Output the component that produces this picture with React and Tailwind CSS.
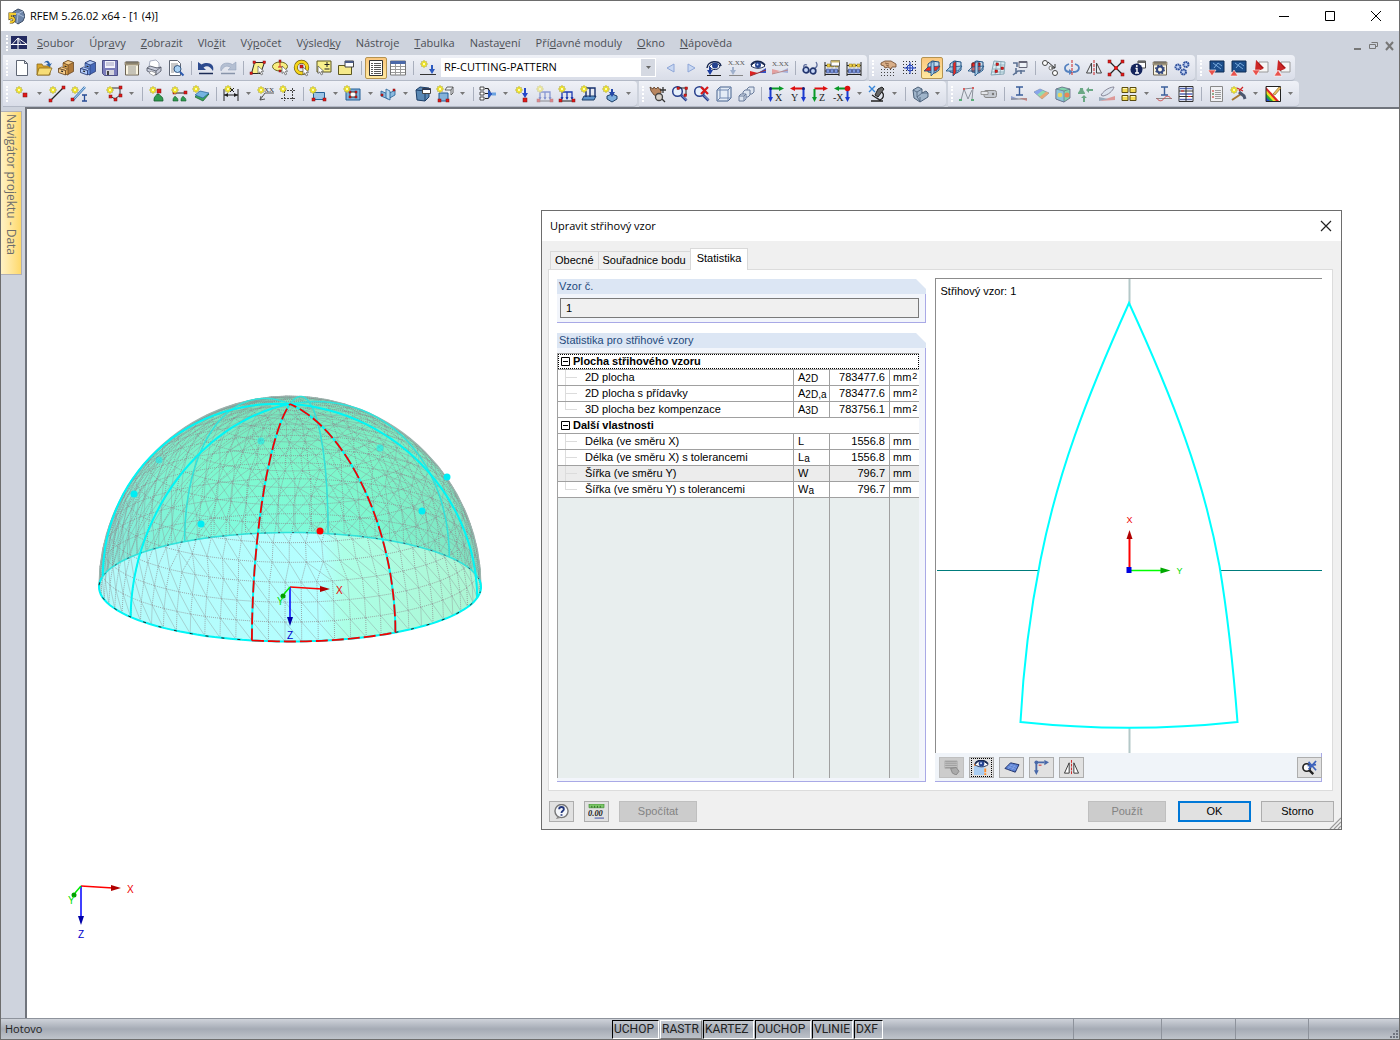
import { useState } from "react";

const Star = ({ x = 0, y = 0 }) => (
  <g transform={`translate(${x} ${y})`}>
    <path d="M4 .5v7M.5 4h7M1.500 1.500l5 5M6.500 1.500l-5 5" stroke="#a8a040" strokeWidth="1.600" />
    <path d="M4 .5v7M.5 4h7M2 2l4 4M6 2L2 6" stroke="#f5ea28" strokeWidth="1.200" />
    <rect x="3" y="3" width="2" height="2" fill="#fffcb0" />
  </g>
);

const Node = ({ x, y, s = 4 }) => (
  <rect x={x} y={y} width={s} height={s} fill="#e01818" stroke="#7c1414" strokeWidth=".5" />
);

const Cursor = ({ x = 8, y = 7 }) => (
  <path
    transform={`translate(${x} ${y})`}
    d="M0 0v7.5l1.8-1.6 1.4 3 1.5-.7-1.4-2.8 2.4-.2z"
    fill="#fff"
    stroke="#555"
    strokeWidth=".7"
  />
);

const Cabinet = ({ light, mid, dark, line }) => (
  <>
    <path d="M5 3l5-2.500 5.500 2v9L9 15V5z" fill={dark} stroke={line} strokeWidth=".7" />
    <path d="M5 3l5-2.500 5.500 2L10 5z" fill={light} stroke={line} strokeWidth=".6" />
    <path d="M5 3l5 2v10l-5-2z" fill={mid} stroke={line} strokeWidth=".6" />
    <path d="M.5 8.500l3-1.500 6 2-2 1.500z" fill={light} stroke={line} strokeWidth=".6" />
    <path d="M.5 8.500l7 2v4.500l-7-2.500z" fill={light} stroke={line} strokeWidth=".8" />
    <path d="M3 11l2 .6M6.500 6l2 .7" stroke="#222" strokeWidth="1.200" />
  </>
);

const Planes = ({ red }) => (
  <>
    <path d="M4 4l4-3 7 1v8l-4 3-7-1z" fill="#c4dcee" stroke="#1d4f80" />
    {red === 3 && <path d="M4 3h8v8H4z" fill="#ee2a20" stroke="#7c1414" />}
    <path d="M0 11l4-4 12-1-4 5z" fill={red === 1 ? "#ee2a20" : "#9cc6e4"} stroke="#1d4f80" strokeWidth=".8" fillOpacity={red === 3 ? 0.4 : 1} />
    <path d="M7 3l3-2v12l-3 3z" fill={red === 2 ? "#ee2a20" : "#a6cbe6"} stroke="#1d4f80" strokeWidth=".8" />
  </>
);

const Lens = () => (
  <>
    <circle cx="5.500" cy="5.500" r="4.800" fill="#e6f0fb" stroke="#263e8c" strokeWidth="1.500" />
    <path d="M9 9l5.500 5.500" stroke="#263e8c" strokeWidth="2.600" />
    <path d="M10 9.500l4.500 4.500" stroke="#9db0e0" />
  </>
);

const Eye = ({ y = 0 }) => (
  <g transform={`translate(0 ${y})`}>
    <path d="M1 6c3-5 10-5 14 0-4 3-10 3-14 0z" fill="#fff" stroke="#16264f" />
    <path d="M1 5c3-5 10-5 14 0" fill="none" stroke="#16264f" strokeWidth="1.500" />
    <circle cx="8" cy="5" r="3" fill="#24428f" />
    <circle cx="7.500" cy="4.500" r="1" fill="#cfe0ff" />
  </g>
);

const AxisView = ({ letter, flip, dot }) => (
  <>
    <g transform={flip ? "translate(16 0) scale(-1 1)" : undefined}>
      <path d="M2.500 2.500H11" stroke={flip ? (dot ? "#0a9a28" : "#d11") : "#0a9a28"} strokeWidth="2" />
      <path d="M11 0l5 2.500L11 5z" fill={flip ? (dot ? "#0a9a28" : "#d11") : "#0a9a28"} />
      <path d="M2.500 3v8" stroke="#1c3bd0" strokeWidth="2" />
      <path d="M0 11l2.500 5L5 11z" fill="#1c3bd0" />
      <circle cx="2.500" cy="2.500" r={dot ? 2.8 : 1.5} fill={dot ? "#d11" : "#14207c"} />
    </g>
    <text x={flip ? (dot ? -1 : 1) : 7} y="15" fontSize="10" fontFamily="Liberation Serif" fill="#222">{letter}</text>
  </>
);

const Beads = () => (
  <>
    <path d="M1 2v14M15 2v14M1 5.500h14M1 11h14M1 14.500h14" stroke="#222" />
    <path d="M3 4h3v3H3zM6.500 4h3v3h-3zM11 4h3v3h-3z" fill="#efd04a" stroke="#8a7012" strokeWidth=".5" />
    <path d="M2.500 9h3v4h-3zM6.500 9h3v4h-3zM10.500 9h3v4h-3z" fill="#7b94dc" stroke="#26397e" strokeWidth=".5" />
  </>
);

const Load = ({ faded }) => (
  <g opacity={faded ? 0.45 : 1}>
    <path d="M3 13V6h10v7M8 6v7" fill="none" stroke="#1c3bb0" strokeWidth="1.300" />
    <path d="M1.500 11L3 14l1.500-3M6.500 11L8 14l1.500-3M11.500 11l1.500 3 1.500-3" fill="#1c3bb0" />
    <path d="M1 15h14" stroke="#222" />
    <Star x={-1} y={-1} />
    <Node x={0} y={13} s={3} />
    <Node x={13} y={13} s={3} />
  </g>
);

const Clipboard = () => (
  <>
    <path d="M1.500 3h13v12h-13z" fill="#fbf6e2" stroke="#6b6252" />
    <path d="M1 2h14v3H1z" fill="#b9ad8e" stroke="#6b6252" strokeWidth=".6" />
    <path d="M3 1v3M5 1v3M7 1v3M9 1v3M11 1v3M13 1v3" stroke="#444" strokeWidth=".8" />
  </>
);

const IBeam = () => <path d="M5 1h7M8.500 1v8M5 9h7" fill="none" stroke="#3b5f9c" strokeWidth="1.400" />;

const icons = {
  file: <path d="M2.500 .5h8l3 3v12h-11zM10.500 .5v3h3" fill="#fff" stroke="#5f6674" />,
  open: (
    <>
      <path d="M1 4h5l1 2h7v9H1z" fill="#d9a62c" stroke="#8a6a1c" strokeWidth=".8" />
      <path d="M3 8h13l-3 7H1z" fill="#f7dd76" stroke="#8a6a1c" strokeWidth=".8" />
      <path d="M8 3c2-3 5-3 6 1l2-1-2.500 4L10 4.500l2-.5c-1-2-2-2-4-1z" fill="#2c63a8" />
    </>
  ),
  cabinet: <Cabinet light="#f4cc8c" mid="#dfa650" dark="#b07a3a" line="#5e3c18" />,
  cabinetBlue: <Cabinet light="#b4ccf8" mid="#7096e0" dark="#4668b8" line="#1c2f68" />,
  save: (
    <>
      <path d="M.5.500h15v15h-13l-2-2z" fill="#7a7cba" stroke="#4c4f86" />
      <path d="M3 1h10v7H3z" fill="#f3f3fb" />
      <path d="M4 3h8M4 5h8" stroke="#a0a0c0" />
      <path d="M4 10h8v5H4z" fill="#d5d5de" />
      <path d="M5 11h2v4H5z" fill="#444" />
    </>
  ),
  clipboard: (
    <>
      <Clipboard />
      <path d="M4 7h8M4 9h8M4 11h8M4 13h8" stroke="#777" strokeWidth=".8" />
    </>
  ),
  print: (
    <>
      <path d="M3 7l1-6 6-1 3 3v5z" fill="#fff" stroke="#8890a8" strokeWidth=".7" />
      <path d="M1 8l3-2 7 2 4-1v4l-5 4-9-4z" fill="#c9cddb" stroke="#4d5260" strokeWidth=".8" />
      <path d="M1 8l9 3 5-4M10 11v4" fill="none" stroke="#4d5260" strokeWidth=".8" />
      <path d="M3 13l2-2 5 2-2 3z" fill="#fff" stroke="#555" strokeWidth=".5" />
    </>
  ),
  preview: (
    <>
      <path d="M1.500 .5h8l3 3v12h-11z" fill="#fff" stroke="#5f6674" />
      <path d="M3 4h7M3 6h7M3 8h4M3 10h3M3 12h3" stroke="#777" strokeWidth=".8" />
      <circle cx="9.500" cy="9" r="3.500" fill="#a9d2f5" stroke="#34557f" />
      <path d="M12 12l3.500 3.500" stroke="#2d5bb0" strokeWidth="2" />
    </>
  ),
  undo: (
    <>
      <path d="M0 2v8h8L5.500 7.500C9 5 12 6 15 11 17 4 10 1 3.500 4.500z" fill="#2c4a8e" />
      <path d="M1 13.500h14" stroke="#1b2b55" strokeWidth="1.500" />
    </>
  ),
  redo: (
    <>
      <path d="M16 2v8H8l2.500-2.500C7 5 4 6 1 11-1 4 6 1 12.500 4.500z" fill="#b4bfd2" stroke="#8f9cb6" strokeWidth=".5" />
      <path d="M1 13.500h14" stroke="#8894aa" strokeWidth="1.500" />
    </>
  ),
  pickPlane: (
    <>
      <path d="M4.500 2.500h10l-4 11h-9z" fill="#f8f08c" stroke="#2a2a20" />
      <Node x={3} y={1} s={2.5} />
      <Node x={13} y={1} s={2.5} />
      <Node x={0} y={12} s={2.5} />
      <Cursor x={8} y={6} />
    </>
  ),
  pickEllipse: (
    <>
      <ellipse cx="8" cy="6.500" rx="7.500" ry="4.500" fill="#f8ee80" stroke="#6b651c" />
      <path d="M8 1v6M6 7h5" stroke="#c22" />
      <Node x={7} y={0} s={2} />
      <Node x={7} y={10} s={2} />
      <Cursor x={10} y={6} />
    </>
  ),
  pickRing: (
    <>
      <circle cx="7.500" cy="7.500" r="5.700" fill="none" stroke="#6b5a10" strokeWidth="4" />
      <circle cx="7.500" cy="7.500" r="5.700" fill="none" stroke="#f6d51a" strokeWidth="2.600" />
      <Node x={6} y={5} s={3} />
      <Cursor x={9} y={7} />
    </>
  ),
  pickAdd: (
    <>
      <path d="M1 1h14v11H1z" fill="#f8f08c" stroke="#5c5720" />
      <path d="M11 2v5M8.500 4.500h5M8.500 9h5" stroke="#222" />
      <Cursor x={2} y={6} />
    </>
  ),
  pickWindow: (
    <>
      <path d="M.5 5.500h13v9H.5z" fill="#f5e98a" stroke="#5c5720" />
      <path d="M7 1h8.500v6H7z" fill="#fff" stroke="#444" />
      <path d="M7 1h8.500v2H7z" fill="#4a5b88" />
    </>
  ),
  list: (
    <>
      <path d="M1.500 .5h13v15h-13z" fill="#fff" stroke="#333" />
      <path d="M6 3.500h7M6 5.500h7M6 7.500h7M6 9.500h7M6 11.500h7M6 13.500h7M3 3.500h2M3 5.500h2M3 7.500h2M3 9.500h2M3 11.500h2M3 13.500h2" stroke="#444" strokeWidth=".9" />
    </>
  ),
  grid: (
    <>
      <path d="M.5 1h15v14H.5z" fill="#fff" stroke="#777" />
      <path d="M.5 1h15v3H.5z" fill="#4a68a8" />
      <path d="M1 6.500h14M1 9.500h14M1 12.500h14M5.500 4v11M10.500 4v11" stroke="#9a9a9a" />
    </>
  ),
  starLoad: (
    <>
      <Star x={0} y={0} />
      <path d="M12 5v5" stroke="#2c5ac0" strokeWidth="2" />
      <path d="M9 9l3 5 3-5z" fill="#2c5ac0" />
      <path d="M0 14.500h16" stroke="#333" />
    </>
  ),
  prev: <path d="M12 4v8L5 8z" fill="#c9d8f2" stroke="#8ea6d8" />,
  next: <path d="M4 4v8l7-4z" fill="#c9d8f2" stroke="#8ea6d8" />,
  eyeLoad: (
    <>
      <path d="M1 8C1 1 14-1 15 6" fill="none" stroke="#16264f" strokeWidth="1.500" />
      <path d="M3 7c2-4 8-5 11-1-1 4-7 5-11 1z" fill="#fff" stroke="#16264f" />
      <circle cx="9" cy="5.500" r="3" fill="#24428f" />
      <path d="M4 7v4" stroke="#1d3fa0" strokeWidth="2" />
      <path d="M1 10l3 5 3-5z" fill="#1d3fa0" />
      <path d="M1 15.500h14" stroke="#222" />
    </>
  ),
  valLoad: (
    <>
      <text x="0" y="5" fontSize="7" fontFamily="Liberation Serif" fill="#555">X.XX</text>
      <path d="M5 7v4" stroke="#9fb0cc" strokeWidth="2" />
      <path d="M2 10l3 5 3-5z" fill="#9fb0cc" />
      <path d="M1 15.500h14" stroke="#888" />
    </>
  ),
  eyeResult: (
    <>
      <path d="M0 16v-5l8 2z" fill="#d22" />
      <path d="M16 8v5l-8 0z" fill="#3454c8" />
      <path d="M0 16l16-6" stroke="#933" />
      <Eye />
    </>
  ),
  valResult: (
    <>
      <text x="0" y="6" fontSize="7" fontFamily="Liberation Serif" fill="#555">X.XX</text>
      <path d="M0 14v-5l8 2z" fill="#e4a0a0" />
      <path d="M16 8v5l-8-1z" fill="#a3b0dc" />
      <path d="M0 14l16-4" stroke="#b88" />
    </>
  ),
  glasses: (
    <>
      <circle cx="4" cy="10" r="2.800" fill="#c6d6f6" stroke="#22356e" strokeWidth="1.700" />
      <circle cx="11" cy="11" r="2.800" fill="#c6d6f6" stroke="#22356e" strokeWidth="1.700" />
      <path d="M2 8c-1-3 1-4 3-3M13 8c2-1 3-3 1-6" fill="none" stroke="#5c6c9c" strokeWidth="1.300" />
    </>
  ),
  abacusWin: (
    <>
      <Beads />
      <path d="M7 .5h8.500V6H7z" fill="#fff" stroke="#444" strokeWidth=".8" />
      <path d="M7 .5h8.500v2H7z" fill="#c8b468" />
    </>
  ),
  abacus: <Beads />,
  handGrid: (
    <>
      <path d="M1 9.500h15M1 12.500h15M1 15.500h15" stroke="#444" strokeDasharray="1 2" />
      <path d="M1 3l4-2 6 0 5 3v3l-4 0-1 2-3-2-3 1-1-2-3-1z" fill="#d8ae88" stroke="#6b452a" strokeWidth=".8" />
      <path d="M5 3l4 1M6 5l3 1" stroke="#6b452a" strokeWidth=".7" />
    </>
  ),
  snapGrid: (
    <>
      <path d="M1 1.500h15M1 4.500h15M1 7.500h15M1 10.500h15M1 13.500h15" stroke="#333" strokeDasharray="1 2" />
      <circle cx="8" cy="8" r="3" fill="#dce7fb" stroke="#1b3ab8" />
      <path d="M8 2v12M2 8h12" stroke="#1b3ab8" />
    </>
  ),
  planeXY: <Planes red={1} />,
  planeYZ: <Planes red={2} />,
  planeXZ: <Planes red={3} />,
  gridRed: (
    <>
      <path d="M4 1l11 1-1 12-13 1z" fill="#d8ecf3" stroke="#86a6b4" />
      <path d="M4 5h11M3 9h11M2 12h12M7 1L5 15M11 1l-1 14" stroke="#86a6b4" strokeWidth=".8" />
      <Node x={6} y={3} s={2.5} />
      <Node x={11} y={7} s={2.5} />
      <Node x={5} y={10} s={2.5} />
    </>
  ),
  plug: (
    <>
      <path d="M7 1.500h8v6H7z" fill="#eef2f8" stroke="#667" />
      <path d="M7 1.500h8v1.500H7z" fill="#667" />
      <path d="M1 3h4v4M1 15l5-4h7M4 8v6M9 10v4" fill="none" stroke="#5c7294" strokeWidth="1.600" />
    </>
  ),
  moveCopy: (
    <>
      <circle cx="3" cy="3" r="2.500" fill="#fff" stroke="#444" />
      <circle cx="13" cy="13" r="2.500" fill="#fff" stroke="#444" />
      <circle cx="9" cy="8" r="2" fill="#fff" stroke="#777" />
      <path d="M6 2l7 6M13 4v4H9" fill="none" stroke="#333" />
    </>
  ),
  rotate: (
    <>
      <path d="M5 4C-1 6 0 12 6 12M11 4c6 2 5 8-2 8" fill="none" stroke="#5582c0" strokeWidth="1.800" />
      <path d="M5 9l4 3-4 3z" fill="#5582c0" />
      <path d="M8 0v16" stroke="#c22" strokeDasharray="3 1" />
    </>
  ),
  mirror: (
    <>
      <path d="M5.500 3v10H.5zM10.500 3v10h5z" fill="#e8ecf2" stroke="#444" />
      <path d="M8 0v16" stroke="#c22" strokeDasharray="3 1" />
    </>
  ),
  cross: (
    <>
      <path d="M1 1l14 14M15 1L1 15" stroke="#222" strokeWidth="1.200" />
      <Node x={0} y={0} s={3} />
      <Node x={13} y={0} s={3} />
      <Node x={0} y={13} s={3} />
      <Node x={13} y={13} s={3} />
      <circle cx="8" cy="8" r="2" fill="#e01818" />
    </>
  ),
  info: (
    <>
      <path d="M8 1h7.500v7H8z" fill="#fff" stroke="#444" />
      <path d="M8 1h7.500v2H8z" fill="#666" />
      <circle cx="6.500" cy="9.500" r="6" fill="#14245c" />
      <path d="M5.500 8.500h1.500V13M5 13h4" fill="none" stroke="#fff" strokeWidth="1.400" />
      <circle cx="6.800" cy="6" r="1" fill="#fff" />
    </>
  ),
  clipGear: (
    <>
      <Clipboard />
      <circle cx="8" cy="9.500" r="3" fill="none" stroke="#33477e" strokeWidth="2" />
      <circle cx="8" cy="9.500" r="4.300" fill="none" stroke="#33477e" strokeWidth="1.400" strokeDasharray="1.700 1.700" />
    </>
  ),
  gears: (
    <>
      <circle cx="4" cy="7" r="2.500" fill="#c4d4f4" stroke="#2d4f9c" strokeWidth="2" strokeDasharray="1.700 .5" />
      <circle cx="12" cy="4.500" r="2.500" fill="#c4d4f4" stroke="#2d4f9c" strokeWidth="2" strokeDasharray="1.700 .5" />
      <circle cx="9.500" cy="12" r="2.500" fill="#c4d4f4" stroke="#2d4f9c" strokeWidth="2" strokeDasharray="1.700 .5" />
    </>
  ),
  screenDown: (
    <>
      <path d="M2 1h14v11H2z" fill="#1c4e8c" stroke="#0e2c54" />
      <path d="M5 3l8 6M6 8l4-5 4 3" fill="none" stroke="#8fc2f0" strokeWidth=".8" />
      <path d="M0 10h8l-4 6z" fill="#e8524c" stroke="#fff" strokeWidth=".6" />
    </>
  ),
  screenUp: (
    <>
      <path d="M2 1h14v11H2z" fill="#1c4e8c" stroke="#0e2c54" />
      <path d="M5 3l8 6M6 8l4-5 4 3" fill="none" stroke="#8fc2f0" strokeWidth=".8" />
      <path d="M0 16h8l-4-6z" fill="#e8524c" stroke="#fff" strokeWidth=".6" />
    </>
  ),
  wedgeDown: (
    <>
      <path d="M7 2h9v10H7z" fill="#f6f6f6" stroke="#999" />
      <path d="M4 0l8 8-6 3z" fill="#a81010" />
      <path d="M4 0L3 11l8-2-3-3z" fill="#cc2626" />
      <path d="M0 10h8l-4 6z" fill="#e8524c" stroke="#fff" strokeWidth=".6" />
    </>
  ),
  wedgeUp: (
    <>
      <path d="M7 2h9v10H7z" fill="#f6f6f6" stroke="#999" />
      <path d="M4 0l8 8-6 3z" fill="#a81010" />
      <path d="M4 0L3 11l8-2-3-3z" fill="#cc2626" />
      <path d="M0 16h8l-4-6z" fill="#e8524c" stroke="#fff" strokeWidth=".6" />
    </>
  ),
  addNode: (
    <>
      <Star x={1} y={0} />
      <Node x={9} y={7} />
    </>
  ),
  addLine: (
    <>
      <path d="M2 14L14 2" stroke="#222" strokeWidth="1.200" />
      <Node x={13} y={0} s={3} />
      <Node x={0} y={13} s={3} />
      <Star x={0} y={0} />
    </>
  ),
  addMember: (
    <>
      <path d="M2 14L14 1" stroke="#3b78b8" strokeWidth="2.500" />
      <path d="M2 14L14 1" stroke="#bcdcf4" />
      <Star />
      <Node x={0} y={12} s={3} />
      <path d="M11 9h5M13.500 9v6M11 15h5" stroke="#264a94" strokeWidth="1.300" />
    </>
  ),
  addPoly: (
    <>
      <path d="M6 2h8v7l-5 4-5-3" fill="none" stroke="#333" />
      <Star />
      <Node x={13} y={0} s={3} />
      <Node x={13} y={8} s={3} />
      <Node x={3} y={9} s={3} />
      <Node x={8} y={12} s={3} />
    </>
  ),
  addSupport: (
    <>
      <path d="M5 15c0-6 2-4 3-7h2c1 3 4 1 4 7z" fill="#2f9c50" stroke="#145c2a" strokeWidth=".8" />
      <Node x={8} y={3} />
      <Star />
    </>
  ),
  addLineSupport: (
    <>
      <path d="M2 7h13" stroke="#222" />
      <Node x={13} y={5} s={3} />
      <Node x={2} y={5} s={3} />
      <path d="M2 15c0-4 1-3 2-5 1 2 3 1 3 5zM10 15c0-4 1-3 2-5 1 2 3 1 3 5z" fill="#2f9c50" stroke="#145c2a" strokeWidth=".6" />
      <Star />
    </>
  ),
  addSurfSupport: (
    <>
      <path d="M2 11l5-5 9 2-6 7z" fill="#3ca45c" stroke="#145c2a" strokeWidth=".7" />
      <path d="M2 9l5-4 9 2-6 5z" fill="#75b4e0" stroke="#225f96" strokeWidth=".7" />
      <Star x={-1} y={-1} />
    </>
  ),
  dimension: (
    <>
      <path d="M1 3v12M15 3v12M1 9h14" stroke="#222" />
      <path d="M1 9l4-2v4zM15 9l-4-2v4z" fill="#222" />
      <Star x={1} y={-1} />
      <path d="M7 2l4 4M11 2L7 6" stroke="#222" />
    </>
  ),
  comment: (
    <>
      <path d="M2 14l5-7h9M2 14l1-4M2 14l5-1" fill="none" stroke="#555" />
      <Star x={-1} />
      <text x="6" y="6" fontSize="7" fontFamily="Liberation Serif" fill="#333">XX</text>
    </>
  ),
  guides: (
    <>
      <path d="M4.500 2v13M12.500 2v13M1 4.500h15M1 12.500h15" stroke="#444" strokeDasharray="2 1" />
      <Star x={-1} y={-1} />
    </>
  ),
  addSurface: (
    <>
      <path d="M3.500 6.500h11v7h-11z" fill="#9cc4e6" stroke="#225f96" />
      <Star x={-1} />
      <Node x={2} y={12} s={3} />
      <Node x={13} y={12} s={3} />
    </>
  ),
  addOpening: (
    <>
      <path d="M1 3h14v11H1z" fill="#82b2dc" stroke="#225f96" />
      <path d="M5 6h6v5H5z" fill="#fff" stroke="#333" />
      <Node x={4} y={5} s={2} />
      <Node x={10} y={5} s={2} />
      <Node x={4} y={10} s={2} />
      <Node x={10} y={10} s={2} />
      <Star x={-2} y={-1} />
    </>
  ),
  intersect: (
    <>
      <path d="M1 5l7 3v5l-7-3zM8 8l7-4v5l-7 4z" fill="#8ab9de" stroke="#225f96" strokeWidth=".8" />
      <path d="M6 3l4 2v9l-4-2z" fill="#b8d7ee" stroke="#225f96" strokeWidth=".8" />
      <Node x={1} y={8} s={2} />
      <Node x={13} y={3} s={2} />
    </>
  ),
  solidWin: (
    <>
      <path d="M1 4l4-3 9 1v9l-4 4-8-1z" fill="#5a88b4" stroke="#1d3f68" />
      <path d="M1 4l9 1v10" fill="none" stroke="#1d3f68" />
      <path d="M7.500 2.500h8v5h-8z" fill="#fff" stroke="#444" />
      <path d="M7.500 2.500h8V4h-8z" fill="#26365c" />
    </>
  ),
  addSolid: (
    <>
      <path d="M8 4l2-3h6v6l-2 2M8 4h6v5M14 4l2-3" fill="#eef2f8" stroke="#555" strokeWidth=".9" />
      <path d="M2 7h9v8H2z" fill="#84b2da" stroke="#225f96" />
      <Star x={-1} y={-1} />
      <Node x={1} y={13} s={3} />
      <Node x={9} y={13} s={3} />
    </>
  ),
  combos: (
    <>
      <path d="M5 2.500h3L10 6M5 12.500h3L10 10M5 7.500h5" fill="none" stroke="#222" strokeWidth="1.200" />
      <path d="M0 1h4v3H0zM0 6h4v3H0zM0 11h4v3H0z" fill="#fff" stroke="#222" strokeWidth=".8" />
      <path d="M8 4l5 4-5 4z" fill="#2c5ac0" />
      <path d="M12 6.500h4v3h-4z" fill="#6ba2e0" />
    </>
  ),
  nodeLoad: (
    <>
      <path d="M10 2v7" stroke="#2448c8" strokeWidth="2" />
      <path d="M7 7l3 5 3-5z" fill="#2448c8" />
      <Star />
      <Node x={8} y={12} />
    </>
  ),
  lineLoadOff: <Load faded />,
  lineLoad: <Load />,
  surfLoad: (
    <>
      <path d="M1 14l2-4h12l-2 4z" fill="#5e94cc" stroke="#1d3f68" />
      <path d="M4 2h10v9M9 2v9M5 5v6" fill="none" stroke="#16306e" strokeWidth="1.400" />
      <Star x={-1} y={-1} />
    </>
  ),
  solidLoad: (
    <>
      <path d="M4 10l5-2 5 2v3l-5 3-5-3z" fill="#7eaedc" stroke="#1d3f68" />
      <path d="M9 3v4" stroke="#2448a8" strokeWidth="2" />
      <path d="M6 6h6l-3 5z" fill="#2448a8" />
      <Star x={-1} y={-1} />
    </>
  ),
  pan: (
    <>
      <path d="M0 1l3 2 1-2 2 2 2-2 1 2 2 0v4l-3 3-4-1-3-4z" fill="#b98660" stroke="#5a3a22" strokeWidth=".8" />
      <circle cx="9" cy="11" r="3.500" fill="#d8d0c8" stroke="#444" strokeWidth="1.300" />
      <path d="M12 13l3 3M13 1v6M10 4h6" stroke="#333" strokeWidth="1.300" />
    </>
  ),
  zoomWin: (
    <>
      <Lens />
      <path d="M6 2h8v7" fill="none" stroke="#222" />
      <Node x={5} y={1} s={2.5} />
      <Node x={13} y={1} s={2.5} />
      <Node x={12} y={8} s={2.5} />
    </>
  ),
  zoomOff: (
    <>
      <Lens />
      <path d="M7 1l7 7M14 1L7 8" stroke="#d81818" strokeWidth="2.200" />
    </>
  ),
  cube: (
    <>
      <path d="M1 4l3-3h11v11l-3 3H1z" fill="#e4ecf6" stroke="#45618c" />
      <path d="M1 4h11v11M12 4l3-3M4 1v11h11M4 12l-3 3" fill="none" stroke="#7088b0" />
    </>
  ),
  cubes: (
    <>
      <path d="M9 3l2-2h5v5l-2 2H9z" fill="#dde5f0" stroke="#6a7c9c" />
      <path d="M5 6l2-2h5v5l-2 2H5z" fill="#dde5f0" stroke="#6a7c9c" />
      <path d="M1 10l2-2h5v5l-2 2H1zM1 10h5v5M6 10l2-2" fill="#dde5f0" stroke="#6a7c9c" />
    </>
  ),
  viewX: <AxisView letter="X" />,
  viewY: <AxisView letter="Y" flip />,
  viewZ: (
    <>
      <path d="M2.500 2.500H11" stroke="#d11" strokeWidth="2" />
      <path d="M11 0l5 2.500L11 5z" fill="#d11" />
      <path d="M2.500 3v8" stroke="#0a9a28" strokeWidth="2" />
      <path d="M0 11l2.500 5L5 11z" fill="#0a9a28" />
      <text x="7" y="15" fontSize="10" fontFamily="Liberation Serif" fill="#222">Z</text>
    </>
  ),
  viewNegX: <AxisView letter="-X" flip dot />,
  scope: (
    <>
      <path d="M9 3l4-2 2 2-6 8-3-2z" fill="#666" stroke="#222" />
      <path d="M3 9l6 4M2 15h12M8 12l4 3M13 6c3 3 1 7-2 8" fill="none" stroke="#222" strokeWidth="1.300" />
      <path d="M0 0l6 6M6 0L0 6" stroke="#3a86d8" strokeWidth="1.400" />
    </>
  ),
  block: (
    <>
      <path d="M1 4l5-3 4 2v4l4-2 2 2v4l-8 5-6-4z" fill="#9fb4ca" stroke="#4b6078" />
      <path d="M1 4l4 2v5l3 4M5 6l5-3M5 11l5-4 6 0M8 11v5" fill="none" stroke="#4b6078" strokeWidth=".8" />
    </>
  ),
  arch: (
    <>
      <path d="M2 14L5 3M5 3l9-1M14 2l-1 12M5 3l4 10M9 13l4-9" fill="none" stroke="#8c929c" />
      <path d="M0 13h3v2H0zM12 13h3v2h-3z" fill="#5cae7a" />
      <path d="M4 2h2v2H4zM13 1h2v2h-2z" fill="#d46060" />
    </>
  ),
  roller: (
    <>
      <rect x="3" y="4.500" width="12.500" height="7" rx="2" fill="#c5c9d0" stroke="#888" />
      <path d="M0 5.500h7v3H0z" fill="#e4e6ea" stroke="#888" strokeWidth=".8" />
      <circle cx="12" cy="8" r="1.200" fill="#777" />
    </>
  ),
  beamForce: (
    <>
      <IBeam />
      <path d="M0 10v4l8-1z" fill="#8fa0d0" />
      <path d="M16 15v-3l-8 0z" fill="#d88" />
      <path d="M0 13h16" stroke="#888" />
    </>
  ),
  surfRes: (
    <>
      <path d="M1 6l6-3 9 4-7 6z" fill="#90dcb0" stroke="#668" strokeWidth=".5" />
      <path d="M1 6l6-3 3 1.300-6 4.400z" fill="#88a4ec" />
      <path d="M13 5.700l3 1.300-7 6-2.500-2z" fill="#e8a878" />
    </>
  ),
  solidRes: (
    <>
      <path d="M1 3l6-2 8 2v9l-6 4-8-3z" fill="#82d4ac" stroke="#557" strokeWidth=".7" />
      <path d="M1 3l8 2v11l-8-3zM9 5l6-2" fill="#8fc4d8" stroke="#557" strokeWidth=".5" />
      <circle cx="12" cy="9" r="2.500" fill="#e88858" />
      <circle cx="5" cy="9" r="2.300" fill="#e8d860" />
    </>
  ),
  reaction: (
    <>
      <path d="M1 8c0-3 2-2 2-6h3c0 4 2 3 2 6z" fill="#6aa884" />
      <path d="M7 16v-5M16 4h-5" stroke="#6aa884" strokeWidth="2" />
      <path d="M4 12l3-3 3 3zM12 1L9 4l3 3z" fill="#6aa884" />
    </>
  ),
  blade: (
    <>
      <path d="M2 9c4-6 10-8 13-8-1 4-6 8-11 9z" fill="#dbe3ee" stroke="#889" />
      <path d="M0 15l16-5v4z" fill="#d99" />
      <path d="M0 11l9 2-9 2z" fill="#9ab" />
    </>
  ),
  tiles: (
    <>
      <path d="M1 1.500h6v5H1zM9 1.500h6v5H9zM1 9.500h6v5H1zM9 9.500h6v5H9z" fill="#f4dc54" stroke="#5a4c10" />
      <path d="M2 2.500h4M10 2.500h4M2 10.500h4M10 10.500h4" stroke="#fdf6b8" />
    </>
  ),
  beamWave: (
    <>
      <IBeam />
      <path d="M0 12.500h16" stroke="#888" />
      <path d="M1 12.500c2 3 5 3 7 0s5-3 7 0" fill="none" stroke="#d04848" />
    </>
  ),
  tablePair: (
    <>
      <path d="M1 .5h14v15H1z" fill="#fff" stroke="#333" />
      <path d="M1.500 2.500h13M1.500 8h13M1.500 13.500h13" stroke="#5468b8" strokeWidth="1.600" />
      <path d="M1 5h14M1 10.500h14M8 .5v15" stroke="#333" />
      <path d="M3 5h3M10 10.500h3" stroke="#d22" />
    </>
  ),
  report: (
    <>
      <path d="M2.500 .5h12v15h-12z" fill="#f0f1f4" stroke="#888" />
      <path d="M7 4.500h6M7 6.500h6M7 8.500h6M7 10.500h6M7 12.500h6" stroke="#888" strokeWidth=".8" />
      <path d="M4 4h2v2H4zM4 10h2v2H4z" fill="#d88" />
      <path d="M4 7h2v2H4z" fill="#8a8" />
    </>
  ),
  hammer: (
    <>
      <path d="M2 14l9-6" stroke="#a87830" strokeWidth="2" />
      <path d="M9 6l5 4 1 3" fill="none" stroke="#4c5870" strokeWidth="3" />
      <path d="M7 2l6 3M13 1L9 5" stroke="#c22" strokeWidth="1.200" />
      <Star />
    </>
  ),
  palette: (
    <>
      <path d="M1 1h14v14H1z" fill="#fff" />
      <path d="M1 1l13 14H1z" fill="#e02828" />
      <path d="M1 4l10 11H1z" fill="#f0e020" />
      <path d="M1 7.500L8 15H1z" fill="#28a83c" />
      <path d="M1 11l4 4H1z" fill="#2448c8" />
      <path d="M1 .5h14.500v15H1z" fill="none" stroke="#222" />
      <path d="M8 8l6-7 2 1-6 7z" fill="#eec060" stroke="#7a5a1c" strokeWidth=".6" />
    </>
  ),
};

const row1 = [
  [
    "file", "open", "cabinet", "cabinetBlue", "save", "clipboard", "print", "preview", "|",
    "undo", "redo", "|", "pickPlane", "pickEllipse", "pickRing", "pickAdd", "pickWindow", "|",
    "*list", "grid", "|", "starLoad", "combo", "prev", "next", "eyeLoad", "valLoad", "eyeResult",
    "valResult", "|", "glasses", "abacusWin", "abacus",
  ],
  [
    "handGrid", "snapGrid", "*planeXY", "planeYZ", "planeXZ", "gridRed", "plug", "|",
    "moveCopy", "rotate", "mirror", "cross", "info", "clipGear", "gears",
  ],
  ["screenDown", "screenUp", "wedgeDown", "wedgeUp"],
];

const row2 = [
  [
    "addNode", "v", "addLine", "addMember", "v", "addPoly", "v", "|",
    "addSupport", "addLineSupport", "addSurfSupport", "|", "dimension", "v", "comment", "guides", "|",
    "addSurface", "v", "addOpening", "v", "intersect", "v", "solidWin", "addSolid", "v", "|",
    "combos", "v", "nodeLoad", "lineLoadOff", "lineLoad", "surfLoad", "solidLoad", "v",
  ],
  [
    "pan", "zoomWin", "zoomOff", "cube", "cubes", "|", "viewX", "viewY", "viewZ", "viewNegX", "v",
    "scope", "v", "|", "block", "v",
  ],
  [
    "arch", "roller", "|", "beamForce", "surfRes", "solidRes", "reaction", "blade", "tiles", "v",
    "beamWave", "tablePair", "|", "report", "hammer", "v", "palette", "v",
  ],
];

const menu = [
  ["", "S", "oubor"],
  ["Úpr", "a", "vy"],
  ["", "Z", "obrazit"],
  ["Vlo", "ž", "it"],
  ["Vý", "p", "očet"],
  ["Výsled", "k", "y"],
  ["Nástro", "j", "e"],
  ["", "T", "abulka"],
  ["Nasta", "v", "ení"],
  ["Pří", "d", "avné moduly"],
  ["", "O", "kno"],
  ["", "N", "ápověda"],
];

function Grip() {
  return (
    <span className="w-2 shrink-0 flex justify-center">
      <span className="w-0 h-4 border-l-2 border-dotted border-white" />
    </span>
  );
}

function Tool({ name }) {
  if (name === "|")
    return (
      <span className="w-2 shrink-0 flex justify-center">
        <span className="w-px h-3.5 bg-[#a9afbd]" />
      </span>
    );
  if (name === "v")
    return (
      <button type="button" aria-label="Více" className="w-[13px] shrink-0 flex justify-center">
        <svg width="5" height="3" viewBox="0 0 5 3"><path d="M0 0h5L2.500 3z" fill="#777" /></svg>
      </button>
    );
  if (name === "combo")
    return (
      <span className="w-[220px] shrink-0 px-0.5">
        <span className="relative flex w-[215px] h-[19px] bg-white">
          <select
            aria-label="Zatěžovací stav"
            className="w-full h-full appearance-none bg-transparent pl-[3px] text-[11px] text-black outline-none"
          >
            <option>RF-CUTTING-PATTERN</option>
          </select>
          <span className="absolute right-px top-px w-3.5 h-[17px] bg-[#d5d9e2] flex items-center justify-center pointer-events-none">
            <svg width="5" height="3" viewBox="0 0 5 3"><path d="M0 0h5L2.500 3z" fill="#666" /></svg>
          </span>
        </span>
      </span>
    );
  const active = name.startsWith("*");
  const key = active ? name.slice(1) : name;
  return (
    <button
      type="button"
      aria-label={key}
      className={
        active
          ? "w-[22px] h-[22px] shrink-0 flex items-center justify-center rounded-xs border border-[#b59350] bg-gradient-to-b from-[#fbc77c] to-[#ffe9a0]"
          : "w-[22px] h-[22px] shrink-0 flex items-center justify-center"
      }
    >
      <svg width="16" height="16" viewBox="0 0 16 16" fill="none" className="overflow-visible">
        {icons[key]}
      </svg>
    </button>
  );
}

function ToolRow({ groups }) {
  return (
    <div className="flex gap-0.5 pl-0.5">
      {groups.map((items, i) => (
        <div
          key={i}
          className="flex items-center h-[26px] pr-0.5 rounded-r-sm border-b border-[#b3b9c6] bg-gradient-to-b from-[#eff1f7] to-[#d9dde8]"
        >
          <Grip />
          {items.map((name, j) => (
            <Tool key={j} name={name} />
          ))}
        </div>
      ))}
    </div>
  );
}

const CX = 290;
const CY = 587;
const R = 191;
const deg = Math.PI / 180;

// orthographic view of the hemisphere, theta around the axis, phi above the rim
const project = (theta, phi) => [
  CX + R * Math.cos(phi) * Math.sin(theta),
  CY + 54.5 * Math.cos(phi) * Math.cos(theta) - 183 * Math.sin(phi),
];

const toPath = (points) =>
  points.map(([x, y], i) => `${i ? "L" : "M"}${x.toFixed(1)} ${y.toFixed(1)}`).join("");

const meridian = (angle) =>
  toPath(Array.from({ length: 31 }, (_, i) => project(angle * deg, i * 3 * deg)));

const rim = (from, to) =>
  toPath(Array.from({ length: 31 }, (_, i) => project((from + ((to - from) * i) / 30) * deg, 0)));

function buildMesh() {
  const rings = 15;
  const lines = [];
  const diagonals = [];
  for (let s = 0; s < 8; s++) {
    const start = -11.5 + s * 45;
    const ring = [];
    for (let j = 0; j < rings; j++) {
      const phi = (j * 90 * deg) / rings;
      const n = Math.max(2, Math.round(9 * Math.cos(phi)));
      ring.push(
        Array.from({ length: n + 1 }, (_, i) => project((start + (45 * i) / n) * deg, phi))
      );
    }
    for (let j = 0; j < rings; j++) {
      lines.push(toPath(ring[j]));
      if (j === rings - 1) break;
      const n = ring[j].length - 1;
      const m = ring[j + 1].length - 1;
      for (let i = 0; i <= n; i++) {
        const k = Math.round((i * m) / n);
        lines.push(toPath([ring[j][i], ring[j + 1][k]]));
        if (i > 0 && k > 0) diagonals.push(toPath([ring[j][i], ring[j + 1][k - 1]]));
      }
    }
  }
  return [lines.join(""), diagonals.join("")];
}

const [meshLines, meshDiagonals] = buildMesh();

const dots = [
  [134, 494, 1], [201, 524, 1], [422, 511, 1], [447, 477, 1],
  [261, 441, 0.5], [159, 460, 0.5], [380, 448, 0.5],
];

function Axes({ x, y }) {
  return (
    <g transform={`translate(${x} ${y})`} fontFamily="Liberation Sans" fontSize="10">
      <path d="M0 0l32 2" stroke="#f00" strokeWidth="1.500" />
      <path d="M30 -1l10 3-10 3z" fill="#b00000" />
      <path d="M0 0v31" stroke="#00f" strokeWidth="1.500" />
      <path d="M-3 30h6l-3 9z" fill="#0000a8" />
      <path d="M0 0l-6 7" stroke="#0e0" strokeWidth="1.500" />
      <circle cx="-7" cy="9" r="2.500" fill="#00a000" />
      <text x="46" y="7" fill="#e00">X</text>
      <text x="-13" y="18" fill="#0d0">Y</text>
      <text x="-3" y="52" fill="#00c">Z</text>
    </g>
  );
}

function Dome() {
  return (
    <svg className="absolute inset-0 w-full h-full" fill="none" aria-label="Model">
      <defs>
        <linearGradient id="upper" x1="0" y1="0" x2="0" y2="1">
          <stop offset="0" stopColor="#78dcb6" />
          <stop offset=".35" stopColor="#7cf8cc" />
          <stop offset="1" stopColor="#86ffee" />
        </linearGradient>
        <linearGradient id="side" x1="99" x2="481" y1="0" y2="0" gradientUnits="userSpaceOnUse">
          <stop offset="0" stopColor="#88dcd4" stopOpacity=".7" />
          <stop offset=".4" stopColor="#7cf8cc" stopOpacity="0" />
          <stop offset=".7" stopColor="#7cf2c4" stopOpacity=".5" />
          <stop offset="1" stopColor="#80dab8" stopOpacity=".9" />
        </linearGradient>
        <linearGradient id="lower" x1="99" x2="481" y1="0" y2="0" gradientUnits="userSpaceOnUse">
          <stop offset="0" stopColor="#b4fafa" />
          <stop offset=".58" stopColor="#b4ffff" />
          <stop offset=".64" stopColor="#acffe6" />
          <stop offset="1" stopColor="#acf5d2" />
        </linearGradient>
      </defs>
      <g transform="translate(-27 -109)">
        <path d="M99 587a191 191 0 0 1 382 0z" fill="url(#upper)" />
        <path d="M99 587a191 191 0 0 1 382 0z" fill="url(#side)" />
        <ellipse cx={CX} cy={CY} rx={R} ry="54.500" fill="url(#lower)" />
        <path d={meshLines} stroke="#8c8488" strokeWidth=".7" strokeDasharray="1 1" />
        <path d={meshDiagonals} stroke="#8c9898" strokeWidth=".7" opacity=".6" />
        <path d="M99 587a191 191 0 0 1 382 0" stroke="#9cb4ae" strokeWidth="1.200" />
        <g stroke="#30e4dc" strokeWidth="1.500">
          <path d={meridian(123.5)} />
          <path d={meridian(168.5)} />
          <path d={meridian(213.5)} />
          <path d={rim(98, 265)} />
        </g>
        <path d={rim(98, 265)} stroke="#456" strokeDasharray="2 12" />
        <g stroke="#00f6f6" strokeWidth="2">
          <path d={meridian(-56.5)} />
          <path d={meridian(-101.5)} />
          <path d={meridian(78.5)} />
          <path d={rim(-100, -11.5)} />
          <path d={rim(33.5, 98)} />
          <path d={meridian(-11.5)} />
          <path d={meridian(33.5)} />
          <path d={rim(-11.5, 33.5)} />
        </g>
        <path d={rim(-95, -11.5)} stroke="#222" strokeDasharray="3 13" />
        <path d={rim(33.5, 85)} stroke="#222" strokeDasharray="3 13" />
        <path
          d={meridian(-11.5) + meridian(33.5) + rim(-11.5, 33.5)}
          stroke="#f50000"
          strokeWidth="1.800"
          strokeDasharray="12 4"
        />
        {dots.map(([x, y, o]) => (
          <circle key={x} cx={x} cy={y} r="3.500" fill="#00eef4" opacity={o} />
        ))}
        <circle cx="320" cy="531" r="3.500" fill="#f00" />
        <Axes x={290} y={587} />
        <Axes x={81} y={886} />
      </g>
    </svg>
  );
}

function PatternView() {
  return (
    <svg className="block w-full h-[474px]" viewBox="0 0 385 474" fill="none" aria-label="Střihový vzor">
      <path d="M193 0v25M193 449v25" stroke="#b4c8c8" strokeWidth="2" />
      <path d="M0 291h102v1H0zM283 291h102v1H283z" fill="#007c7c" shapeRendering="crispEdges" />
      <path
        d="M192.500 24C149 121 121 195 104 281 92 341 86 404 84 443Q192 454.500 301 443C298 404 292 341 283 287 267 199 237 121 192.500 24z"
        stroke="#00ffff"
        strokeWidth="2"
      />
      <path d="M193 291v-31" stroke="#f00" strokeWidth="2" />
      <path d="M190 260h6l-3-9z" fill="#b00000" />
      <path d="M193 291.500h32" stroke="#0f0" strokeWidth="1.500" />
      <path d="M224 288.500v6l10-3z" fill="#00a800" />
      <rect x="190" y="288" width="5" height="6" fill="#0000e0" />
      <g fontFamily="Liberation Sans" fontSize="9">
        <text x="190" y="244" fill="#e00">X</text>
        <text x="240" y="295" fill="#0d0">Y</text>
      </g>
      <text x="4" y="16" fontFamily="Liberation Sans" fontSize="11" fill="#000">Střihový vzor: 1</text>
    </svg>
  );
}

const dialogIcons = {
  texture: (
    <>
      <path d="M1 1h13v8H1z" fill="#999" stroke="#b0b0b0" />
      <path d="M1 3h13M1 5h13M1 7h13M6 11h8M8 13h8" stroke="#c8c8c8" />
      <path d="M7 9l6-1 3 4-3 4-4-2z" fill="#aaa" stroke="#888" />
    </>
  ),
  eyeView: (
    <>
      <path d="M0 6h11v10H0z" fill="#a9cdf2" />
      <path d="M0 5h5M12 9v7" stroke="#ff8a28" strokeWidth="2" strokeDasharray="4 1" />
      <Eye y={-1} />
    </>
  ),
  surface: (
    <>
      <path d="M1 9l6-6 9 2-4 8z" fill="#5c82d4" stroke="#1e2f66" />
      <path d="M4 7l9 3M6 5l8 3M9 4l-5 6M12 5l-4 6" stroke="#96b0ec" strokeWidth=".6" />
    </>
  ),
  axes: (
    <>
      <path d="M2 2.500h9M2.500 3v9" stroke="#4868a8" strokeWidth="2" />
      <path d="M11 0l5 2.500-5 3zM0 11l2.500 5L5 11z" fill="#4868a8" />
      <circle cx="2.500" cy="2.500" r="2" fill="#4868a8" />
      <path d="M5 5.500h3" stroke="#c22" />
    </>
  ),
  mirror: (
    <>
      <path d="M5.500 3v11H.5zM10.500 3v11h5z" fill="#fff" stroke="#333" />
      <path d="M8 0v17" stroke="#c22" strokeDasharray="3 1" />
    </>
  ),
  zoomAll: (
    <>
      <circle cx="5" cy="8" r="4" fill="#fff" stroke="#222" strokeWidth="1.800" />
      <path d="M8 11l4 4" stroke="#222" strokeWidth="2.500" />
      <path d="M7 2l8 9M15 1L7 10M6 6l9-1" stroke="#3c62bc" strokeWidth="1.800" />
    </>
  ),
  help: (
    <>
      <circle cx="8" cy="7.500" r="7" fill="#f4f6fa" stroke="#777" strokeWidth="1.500" />
      <path d="M4 13l-2 3 5-1z" fill="#888" />
      <path d="M5.500 5.500c0-3 5-3 5 0 0 2-2.500 2-2.500 4M8 11v1.500" stroke="#23377c" strokeWidth="2" />
    </>
  ),
  decimals: (
    <>
      <path d="M0 0h16v4H0z" fill="#7cc868" stroke="#3c8830" strokeWidth=".7" />
      <path d="M3 2v2M6 2v2M9 2v2M12 2v2" stroke="#2c6820" />
      <text x="-1" y="13" fontSize="9" fontStyle="italic" fontWeight="bold" fontFamily="Liberation Serif" fill="#222">0.00</text>
      <path d="M6 15h10" stroke="#3448a0" />
    </>
  ),
};

function IconButton({ icon, label, disabled, focused }) {
  return (
    <button
      type="button"
      aria-label={label}
      disabled={disabled}
      className={
        disabled
          ? "w-[25px] h-[21px] flex items-center justify-center border border-[#bfbfbf] bg-[#cccccc]"
          : "w-[25px] h-[21px] flex items-center justify-center border border-[#adadad] bg-[#e1e1e1]"
      }
    >
      <span className={focused ? "p-px border border-dotted border-black" : "p-px"}>
        <svg width="17" height="15" viewBox="0 0 16 16" fill="none" className="overflow-hidden">
          {dialogIcons[icon]}
        </svg>
      </span>
    </button>
  );
}

function Group({ title, children }) {
  return (
    <section className="border-r border-b border-[#a9a9e6] bg-[#f2f5fb]">
      <div className="bg-white -mr-px">
        <h3 className="h-[15px] pl-0.5 leading-[15px] text-[#1f4a7c] bg-[#dce6f4] [clip-path:polygon(0_0,calc(100%_-_10px)_0,100%_10px,100%_100%,0_100%)]">
          {title}
        </h3>
      </div>
      {children}
    </section>
  );
}

const tableData = [
  {
    title: "Plocha střihového vzoru",
    rows: [
      ["2D plocha", "A", "2D", "783477.6", true],
      ["2D plocha s přídavky", "A", "2D,a", "783477.6", true],
      ["3D plocha bez kompenzace", "A", "3D", "783756.1", true],
    ],
  },
  {
    title: "Další vlastnosti",
    rows: [
      ["Délka (ve směru X)", "L", "", "1556.8", false],
      ["Délka (ve směru X) s tolerancemi", "L", "a", "1556.8", false],
      ["Šířka (ve směru Y)", "W", "", "796.7", false],
      ["Šířka (ve směru Y) s tolerancemi", "W", "a", "796.7", false],
    ],
  },
];

const cell = "h-4 p-0 border-b border-r border-[#a0a0a0] whitespace-nowrap leading-[15px]";

function StatsTable() {
  return (
    <table className="w-[362px] h-[425px] table-fixed border-separate border-spacing-0 border-l border-t border-[#a0a0a0] bg-[#e8eeee]">
      <colgroup>
        <col />
        <col className="w-9" />
        <col className="w-[60px]" />
        <col className="w-[29px]" />
      </colgroup>
      <tbody>
        {tableData.map((group, g) => [
          <tr key={group.title} className="h-4 bg-white">
            <th colSpan={4} className="h-4 p-0 text-left leading-[13px] border-b border-[#a0a0a0]">
              <div
                className={
                  g === 0
                    ? "flex items-center gap-[3px] pl-0.5 h-[15px] border border-dotted border-black"
                    : "flex items-center gap-[3px] pl-[3px] h-[15px]"
                }
              >
                <svg width="9" height="9" viewBox="0 0 9 9" fill="none">
                  <path d="M.5.500h8v8h-8zM2 4.500h5" stroke="#000" />
                </svg>
                {group.title}
              </div>
            </th>
          </tr>,
          ...group.rows.map(([label, symbol, sub, value, squared], i) => (
            <tr key={label} className={label === "Šířka (ve směru Y)" ? "h-4 bg-[#ececec]" : "h-4 bg-white"}>
              <td className={cell}>
                <div className="flex">
                  <span className="w-[27px] pl-[7px] flex flex-col">
                    <span className="h-2 w-3 border-l border-b border-[#dcdcdc]" />
                    {i < group.rows.length - 1 && <span className="h-[7px] border-l border-[#dcdcdc]" />}
                  </span>
                  {label}
                </div>
              </td>
              <td className={cell}>
                <div className="flex h-[15px] pl-1">
                  {symbol}
                  <span className="pt-[3px] leading-3 text-[10px]">{sub}</span>
                </div>
              </td>
              <td className={cell}>
                <div className="h-[15px] pr-1 text-right">{value}</div>
              </td>
              <td className="h-4 p-0 border-b border-[#a0a0a0] whitespace-nowrap leading-[15px]">
                <div className="flex h-[15px] pl-[3px] gap-px">
                  mm{squared && <span className="text-[9px] leading-3">2</span>}
                </div>
              </td>
            </tr>
          )),
        ])}
        <tr aria-hidden="true">
          <td className="border-r border-[#a0a0a0]" />
          <td className="border-r border-[#a0a0a0]" />
          <td className="border-r border-[#a0a0a0]" />
          <td />
        </tr>
      </tbody>
    </table>
  );
}

function PatternDialog() {
  const [tab, setTab] = useState("Statistika");

  return (
    <div
      role="dialog"
      aria-label="Upravit střihový vzor"
      className="absolute left-[514px] top-[101px] w-[801px] h-[620px] flex flex-col border border-[#6d6d6d] bg-[#f0f0f0] font-['Liberation_Sans',sans-serif] text-[11px] text-black"
    >
      <div className="h-[30px] shrink-0 flex items-center justify-between pl-2 pr-[9px] bg-white">
        <h2 className="font-['Open_Sans',sans-serif] text-[11px]">Upravit střihový vzor</h2>
        <button type="button" aria-label="Zavřít">
          <svg width="12" height="12" viewBox="0 0 12 12"><path d="M1 1l10 10M11 1L1 11" stroke="#222" strokeWidth="1.200" /></svg>
        </button>
      </div>

      <div role="tablist" className="flex items-end pl-2 h-7 shrink-0 relative z-10">
        {["Obecné", "Souřadnice bodu", "Statistika"].map((name) => (
          <button
            key={name}
            type="button"
            role="tab"
            aria-selected={tab === name}
            onClick={() => setTab(name)}
            className={
              tab === name
                ? "h-[22px] -mb-px px-1.5 pb-0.5 border border-b-0 border-[#d9d9d9] bg-white"
                : "h-[18px] px-1 border border-b-0 border-r-0 border-[#d9d9d9]"
            }
          >
            {name}
          </button>
        ))}
      </div>

      <div className="flex gap-[9px] mx-1.5 mr-2 p-2 pr-2.5 border border-[#dcdcdc] bg-white">
        <div className="w-[369px] shrink-0 flex flex-col gap-2.5 pt-px">
          <Group title="Vzor č.">
            <div className="h-7 px-[3px] pr-[6px] pt-1">
              <input
                aria-label="Vzor č."
                readOnly
                value="1"
                className="block w-full h-5 pl-[5px] border border-[#7a7a7a] bg-[#f0f0f0] outline-none"
              />
            </div>
          </Group>
          <Group title="Statistika pro střihové vzory">
            <div className="pt-[5px] pb-[3px]">
              <StatsTable />
            </div>
          </Group>
        </div>

        <div className="flex-1 flex flex-col">
          <div className="border-l border-t border-[#8c8c8c]">
            <PatternView />
          </div>
          <div className="h-[29px] flex items-center gap-[5px] pl-1 border-r border-b border-[#a9a9e6] bg-[#f0f4f9]">
            <IconButton icon="texture" label="Textura" disabled />
            <IconButton icon="eyeView" label="Zobrazit" focused />
            <IconButton icon="surface" label="Plocha" />
            <IconButton icon="axes" label="Osy" />
            <IconButton icon="mirror" label="Zrcadlit" />
            <span className="ml-auto -mr-px">
              <IconButton icon="zoomAll" label="Zobrazit vše" />
            </span>
          </div>
        </div>
      </div>

      <div className="flex items-center flex-1 px-[7px] pt-0.5 gap-2.5">
        <IconButton icon="help" label="Nápověda" />
        <IconButton icon="decimals" label="Jednotky" />
        <button type="button" disabled className="w-[78px] h-[21px] border border-[#bfbfbf] bg-[#cccccc] text-[#838383]">
          Spočítat
        </button>
        <button type="button" disabled className="ml-auto w-[78px] h-[21px] border border-[#bfbfbf] bg-[#cccccc] text-[#838383]">
          Použít
        </button>
        <button type="button" className="w-[73px] h-[21px] ml-0.5 border-2 border-[#0078d7] bg-[#e1e1e1]">
          OK
        </button>
        <button type="button" className="w-[73px] h-[21px] border border-[#adadad] bg-[#e1e1e1]">
          Storno
        </button>
      </div>
      <svg className="absolute right-0 bottom-0" width="12" height="12" viewBox="0 0 12 12">
        <path d="M1 12L12 1M5 12l7-7M9 12l3-3" stroke="#9a9a9a" strokeWidth="1.200" />
      </svg>
    </div>
  );
}

const toggles = [
  ["UCHOP", "w-[47px]", true],
  ["RASTR", "w-[42px]", false],
  ["KARTEZ", "w-[51px]", true],
  ["OUCHOP", "w-[56px]", true],
  ["VLINIE", "w-[41px]", true],
  ["DXF", "w-[29px]", true],
];

function StatusBar() {
  return (
    <footer className="h-[21px] shrink-0 flex items-center border-t border-[#8e939c] bg-gradient-to-b from-[#cfd3da] via-[#a5abb5] to-[#bfc4cb] text-[#222]">
      <span className="flex-1 pl-1">Hotovo</span>
      <div className="flex gap-px font-['Roboto',sans-serif] text-[12px] leading-4">
        {toggles.map(([name, width, on]) => (
          <button
            key={name}
            type="button"
            aria-pressed={on}
            className={`${width} h-[19px] pl-px text-left border ${
              on
                ? "border-t-black border-l-black border-r-white border-b-white"
                : "border-t-white border-l-white border-r-[#777] border-b-[#777] pb-0.5"
            }`}
          >
            {name}
          </button>
        ))}
      </div>
      <div className="w-[516px] h-full flex justify-end items-end">
        <span className="w-[88px] h-full border-l border-[#8e939c]" />
        <span className="w-[74px] h-full border-l border-[#8e939c]" />
        <span className="w-[73px] h-full border-l border-[#8e939c]" />
        <span className="w-[91px] h-full border-l border-[#8e939c] flex justify-end items-end">
          <svg width="11" height="11" viewBox="0 0 11 11"><path d="M8 2h2v2H8zM8 5h2v2H8zM8 8h2v2H8zM5 5h2v2H5zM5 8h2v2H5zM2 8h2v2H2z" fill="#707580" /></svg>
        </span>
      </div>
    </footer>
  );
}

function TitleBar() {
  return (
    <header className="h-[30px] shrink-0 flex items-center bg-white pl-[7px]">
      <svg width="17" height="17" viewBox="0 0 17 17" fill="none">
        <path d="M5 4l5-3 5 2 2 5-2 5-5 3-4-3z" fill="#6c84a8" stroke="#3c4c64" />
        <path d="M5 4l5 2 5-3M10 6l-1 9M10 6l6 3" stroke="#a8bcd8" />
        <path d="M8 6H2v4c5-2 6 5 0 4" stroke="#5c480a" strokeWidth="3" />
        <path d="M8 6H2v4c5-2 6 5 0 4" stroke="#f3cc30" strokeWidth="1.800" />
      </svg>
      <h1 className="flex-1 pl-[5px] text-[11px] text-black">RFEM 5.26.02 x64 - [1 (4)]</h1>
      <div className="flex">
        <button type="button" aria-label="Minimalizovat" className="w-[46px] flex justify-center">
          <svg width="10" height="10" viewBox="0 0 10 10"><path d="M0 5.500h10" stroke="#000" /></svg>
        </button>
        <button type="button" aria-label="Maximalizovat" className="w-[46px] flex justify-center">
          <svg width="10" height="10" viewBox="0 0 10 10" fill="none"><path d="M.5.500h9v9h-9z" stroke="#000" /></svg>
        </button>
        <button type="button" aria-label="Zavřít" className="w-[46px] flex justify-center">
          <svg width="10" height="10" viewBox="0 0 10 10"><path d="M0 0l10 10M10 0L0 10" stroke="#000" /></svg>
        </button>
      </div>
    </header>
  );
}

function MenuBar() {
  return (
    <nav className="h-6 shrink-0 flex items-center pl-0.5 text-[#4c4f55]">
      <Grip />
      <svg width="16" height="14" viewBox="0 0 16 14" fill="none">
        <path d="M0 0h16v13H0z" fill="#232a60" />
        <path d="M0 8.500h16M7 2v11M7 2L1 8.500M7 2l9 6.500" stroke="#fff" />
        <path d="M7 2v6M7 2l3 6" stroke="#fff" strokeWidth=".6" />
      </svg>
      <div className="flex gap-[15px] pl-2.5 flex-1">
        {menu.map(([before, key, after]) => (
          <button key={before + key + after} type="button" className="whitespace-nowrap">
            {before}
            <u>{key}</u>
            {after}
          </button>
        ))}
      </div>
      <svg width="42" height="10" viewBox="0 0 42 10" fill="none" className="mr-1 mb-1 self-end">
        <path d="M1 8h7" stroke="#777" strokeWidth="2" />
        <path d="M18.500 1.500h6v4h-2M16.500 3.500h6v4h-6z" stroke="#777" />
        <path d="M33 1l7 8M40 1l-7 8" stroke="#777" strokeWidth="2" />
      </svg>
    </nav>
  );
}

export default function App() {
  return (
    <main className="min-h-screen flex flex-col border border-[#6d6d6d] bg-[#ced3dd] font-['Open_Sans','Noto_Sans',sans-serif] text-[11px] overflow-hidden">
      <TitleBar />
      <MenuBar />
      <ToolRow groups={row1} />
      <ToolRow groups={row2} />

      <div className="flex flex-1 items-stretch">
        <aside className="w-6 shrink-0 pt-1">
          <button
            type="button"
            className="w-[21px] h-[164px] flex items-center pt-0.5 border border-l-0 border-[#b0b0b8] bg-gradient-to-r from-[#fff2c4] to-[#ffd968] text-[#6c6c6c] text-[12px] leading-[18px] [writing-mode:vertical-rl]"
          >
            Navigátor projektu - Data
          </button>
        </aside>
        <div className="relative flex-1 min-h-[760px] bg-white border-t-2 border-l-2 border-[#70747c] overflow-hidden">
          <Dome />
          <PatternDialog />
        </div>
      </div>

      <StatusBar />
    </main>
  );
}
